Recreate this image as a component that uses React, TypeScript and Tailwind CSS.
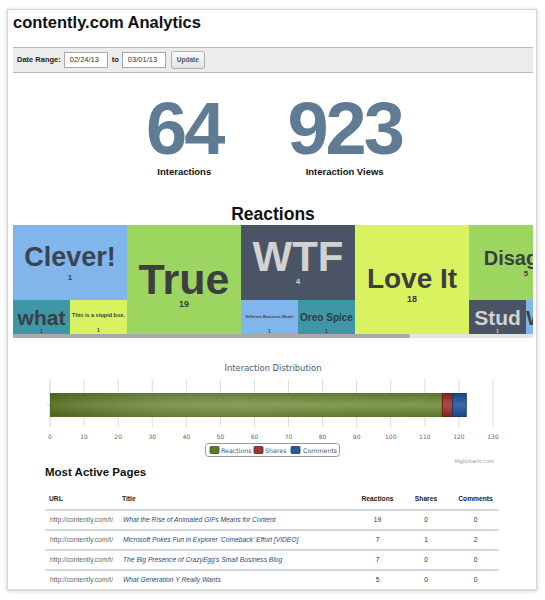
import React from "react";

const SANS = "font-['Liberation_Sans',Arial,sans-serif]";

type Tile = {
  label: string;
  count: number;
  bg: string;
  text: string;
  size: string;
  countSize: string;
  pad: string;
  gap: string;
};

type Column = { top?: Tile; full?: Tile; bottom?: Tile[] };

const COLUMNS: Column[] = [
  {
    top: { label: "Clever!", count: 1, bg: "bg-[#80b6ec]", text: "text-[#3b4452]", size: "text-[27px]", countSize: "text-[8px]", pad: "pt-[19px]", gap: "mt-[2px]" },
    bottom: [
      { label: "what", count: 1, bg: "bg-[#3f96a5]", text: "text-[#3a3f47]", size: "text-[21px]", countSize: "text-[5px]", pad: "pt-[7px]", gap: "mt-0" },
      { label: "This is a stupid box.", count: 1, bg: "bg-[#d9f25f]", text: "text-[#3d3f3a]", size: "text-[5.5px]", countSize: "text-[5px]", pad: "pt-[13px]", gap: "mt-[8px]" },
    ],
  },
  {
    full: { label: "True", count: 19, bg: "bg-[#9dd561]", text: "text-[#3d3e3f]", size: "text-[43px]", countSize: "text-[9px]", pad: "pt-[33px]", gap: "-mt-[2px]" },
  },
  {
    top: { label: "WTF", count: 4, bg: "bg-[#4a5464]", text: "text-[#d2d2d2]", size: "text-[42px]", countSize: "text-[8px]", pad: "pt-[11px]", gap: "-mt-[1px]" },
    bottom: [
      { label: "Different  Business  Model", count: 1, bg: "bg-[#80b6ec]", text: "text-[#3b4452]", size: "text-[4px]", countSize: "text-[5px]", pad: "pt-[15px]", gap: "mt-[9px]" },
      { label: "Oreo Spice", count: 1, bg: "bg-[#3f96a5]", text: "text-[#2f3a44]", size: "text-[10px]", countSize: "text-[5px]", pad: "pt-[13px]", gap: "mt-[5px]" },
    ],
  },
  {
    full: { label: "Love It", count: 18, bg: "bg-[#d9f25f]", text: "text-[#3d3e3f]", size: "text-[28px]", countSize: "text-[9px]", pad: "pt-[40px]", gap: "mt-[1px]" },
  },
  {
    top: { label: "Disagree", count: 5, bg: "bg-[#9dd561]", text: "text-[#3d3e3f]", size: "text-[20px]", countSize: "text-[8px]", pad: "pt-[23px]", gap: "mt-[1px]" },
    bottom: [
      { label: "Stud", count: 1, bg: "bg-[#4a5464]", text: "text-[#d2d2d2]", size: "text-[21px]", countSize: "text-[5px]", pad: "pt-[7px]", gap: "mt-0" },
      { label: "Whoa", count: 1, bg: "bg-[#80b6ec]", text: "text-[#3b4452]", size: "text-[21px]", countSize: "text-[5px]", pad: "pt-[7px]", gap: "mt-0" },
    ],
  },
  {
    full: { label: "Nice", count: 3, bg: "bg-[#3f96a5]", text: "text-[#3a3f47]", size: "text-[28px]", countSize: "text-[8px]", pad: "pt-[40px]", gap: "mt-[1px]" },
  },
];

const PAGES = [
  { title: "What the Rise of Animated GIFs Means for Content", r: 19, s: 0, c: 0 },
  { title: "Microsoft Pokes Fun in Explorer 'Comeback' Effort [VIDEO]", r: 7, s: 1, c: 2 },
  { title: "The Big Presence of CrazyEgg's Small Business Blog", r: 7, s: 0, c: 0 },
  { title: "What Generation Y Really Wants", r: 5, s: 0, c: 0 },
];

function TreeTile({ t, className }: { t: Tile; className: string }) {
  return (
    <div className={`${className} ${t.bg} ${t.text} ${t.pad} overflow-hidden text-center font-bold`}>
      <div className={`${t.size} leading-none whitespace-nowrap`}>{t.label}</div>
      <div className={`${t.countSize} ${t.gap} leading-[1.2]`}>{t.count}</div>
    </div>
  );
}

function Treemap() {
  return (
    <div className="w-[520px]">
      <div className="flex h-[109px] overflow-hidden">
        {COLUMNS.map((col, i) => (
          <div key={i} className="flex w-[114px] shrink-0 flex-col">
            {col.full ? (
              <TreeTile t={col.full} className="h-[109px]" />
            ) : (
              <>
                {col.top && <TreeTile t={col.top} className="h-[75px]" />}
                <div className="flex h-[34px]">
                  {col.bottom?.map((b) => (
                    <TreeTile key={b.label} t={b} className="w-[57px] shrink-0" />
                  ))}
                </div>
              </>
            )}
          </div>
        ))}
      </div>
      <div className="flex h-[4px] bg-[#e4e4e4]">
        <div className="w-[397px] rounded-r-[2px] bg-[#a9a9a9]" />
      </div>
    </div>
  );
}

function DistributionChart() {
  const x0 = 37;
  const scale = 443 / 130;
  const ticks = Array.from({ length: 14 }, (_, i) => i * 10);
  const font = "'DejaVu Sans', Verdana, sans-serif";
  return (
    <svg width="520" height="110" className="block">
      <defs>
        <linearGradient id="g-react" x1="0" x2="0" y1="0" y2="1">
          <stop offset="0" stopColor="#536e22" />
          <stop offset="0.5" stopColor="#7a9444" />
          <stop offset="1" stopColor="#536e22" />
        </linearGradient>
        <linearGradient id="g-react-h" x1="0" x2="1" y1="0" y2="0">
          <stop offset="0" stopColor="#3a5010" stopOpacity="0.4" />
          <stop offset="0.6" stopColor="#ffffff" stopOpacity="0.1" />
          <stop offset="1" stopColor="#ffffff" stopOpacity="0.05" />
        </linearGradient>
        <linearGradient id="g-share" x1="0" x2="0" y1="0" y2="1">
          <stop offset="0" stopColor="#7e2320" />
          <stop offset="0.5" stopColor="#b04a45" />
          <stop offset="1" stopColor="#7e2320" />
        </linearGradient>
        <linearGradient id="g-comm" x1="0" x2="0" y1="0" y2="1">
          <stop offset="0" stopColor="#1b457f" />
          <stop offset="0.5" stopColor="#3a6cae" />
          <stop offset="1" stopColor="#1b457f" />
        </linearGradient>
      </defs>
      <text x="260" y="16" textAnchor="middle" fontFamily={font} fontSize="8.4" fill="#4a5b6c">
        Interaction Distribution
      </text>
      {ticks.map((t) => (
        <line key={t} x1={x0 + t * scale} x2={x0 + t * scale} y1="24" y2="72" stroke={t === 0 ? "#c0d0e0" : "#dcdcdc"} strokeWidth="1" />
      ))}
      <line x1={x0 - 3} x2={x0} y1="50" y2="50" stroke="#c0d0e0" />
      <rect x={x0 + 0.5} y="38.5" width={115 * scale} height="23" fill="url(#g-react)" stroke="#55702a" />
      <rect x={x0 + 0.5} y="38.5" width={115 * scale} height="23" fill="url(#g-react-h)" />
      <rect x={x0 + 115 * scale + 0.5} y="38.5" width={3 * scale} height="23" fill="url(#g-share)" stroke="#6e1e1c" />
      <rect x={x0 + 118 * scale + 0.5} y="38.5" width={4 * scale} height="23" fill="url(#g-comm)" stroke="#173d70" />
      {ticks.map((t) => (
        <text key={t} x={x0 + t * scale} y="84" textAnchor="middle" fontFamily={font} fontSize="6" fill="#666">
          {t}
        </text>
      ))}
      <rect x="192.5" y="88.5" width="134" height="13" rx="3" fill="#fff" stroke="#9a9a9a" />
      <rect x="197" y="91.5" width="9" height="7" rx="1" fill="#5f7a2c" stroke="#3f5516" strokeWidth="0.8" />
      <text x="208" y="98" fontFamily={font} fontSize="6.3" fill="#3e576f">Reactions</text>
      <rect x="241" y="91.5" width="9" height="7" rx="1" fill="#983733" stroke="#6a1c19" strokeWidth="0.8" />
      <text x="252" y="98" fontFamily={font} fontSize="6.3" fill="#3e576f">Shares</text>
      <rect x="278" y="91.5" width="9" height="7" rx="1" fill="#2a5a98" stroke="#163a6a" strokeWidth="0.8" />
      <text x="290" y="98" fontFamily={font} fontSize="6.3" fill="#3e576f">Comments</text>
      <text x="481" y="108" textAnchor="end" fontFamily={font} fontSize="5" fill="#909090">
        Highcharts.com
      </text>
    </svg>
  );
}

export default function App() {
  return (
    <div className={`h-[600px] w-[545px] overflow-hidden bg-white pl-[7px] pt-[9px] ${SANS}`}>
      <div className="h-[581px] w-[530px] overflow-hidden border border-[#d6d6d6] bg-white shadow-[0_1px_4px_rgba(0,0,0,0.22)]">
        <div className="ml-[5px] w-[520px]">
          <h1 className="mt-[2px] text-[16.5px] font-bold leading-[20px] text-[#111]">contently.com Analytics</h1>

          <div className="mt-[15px] flex h-[26px] items-center border-y border-[#b9b9b9] bg-[#ececec] pl-[4px] text-[7.5px]">
            <span className="font-bold text-[#222]">Date Range:</span>
            <div className="ml-[3px] flex h-[16px] w-[44px] items-center border border-[#a9a9a9] bg-white pl-[5px] text-[#333]">02/24/13</div>
            <span className="ml-[4px] font-bold text-[#222]">to</span>
            <div className="ml-[3px] flex h-[16px] w-[44px] items-center border border-[#a9a9a9] bg-white pl-[5px] text-[#333]">03/01/13</div>
            <button className="ml-[5px] h-[18px] w-[34px] rounded-[2px] border border-[#b0b0b0] bg-[linear-gradient(#fafafa,#e2e2e2)] text-[6.5px] font-bold text-[#555]">
              Update
            </button>
          </div>

          <div className="mt-[19px] flex justify-center gap-[65px] pl-[2px]">
            <div className="flex flex-col items-center">
              <div className="text-[74px] font-bold leading-none tracking-[-3px] text-[#5f7c94]">64</div>
              <div className="text-[9.5px] font-bold leading-[12px] text-[#111]">Interactions</div>
            </div>
            <div className="flex flex-col items-center">
              <div className="text-[74px] font-bold leading-none tracking-[-3px] text-[#5f7c94]">923</div>
              <div className="text-[9.5px] font-bold leading-[12px] text-[#111]">Interaction Views</div>
            </div>
          </div>

          <h2 className="mt-[26px] text-center text-[17.5px] font-bold leading-[20px] text-[#111]">Reactions</h2>

          <div className="mt-[1px]">
            <Treemap />
          </div>

          <div className="mt-[17px]">
            <DistributionChart />
          </div>

          <div className="ml-[32px] w-[454px]">
            <h2 className="text-[11.5px] font-bold leading-[14px] text-[#111]">Most Active Pages</h2>
            <table className="mt-[11px] w-[454px] table-fixed border-collapse text-[6.7px]">
              <colgroup>
                <col className="w-[73px]" />
                <col className="w-[237px]" />
                <col className="w-[45px]" />
                <col className="w-[52px]" />
                <col className="w-[47px]" />
              </colgroup>
              <thead>
                <tr className="h-[20px] border-b-2 border-[#d5dae2] font-bold text-[#222]">
                  <th className="pl-[4px] text-left">URL</th>
                  <th className="pl-[4px] text-left">Title</th>
                  <th className="text-center">Reactions</th>
                  <th className="text-center">Shares</th>
                  <th className="text-center">Comments</th>
                </tr>
              </thead>
              <tbody>
                {PAGES.map((p) => (
                  <tr key={p.title} className="h-[20px] border-b-2 border-[#d5dae2]">
                    <td className="pl-[5px] text-[#666]">
                      <div className="w-[63px] overflow-hidden whitespace-nowrap">http://contently.com/t/what</div>
                    </td>
                    <td className="pl-[5px] whitespace-nowrap italic text-[#2b4a7e]">{p.title}</td>
                    <td className="text-center text-[#333]">{p.r}</td>
                    <td className="text-center text-[#333]">{p.s}</td>
                    <td className="text-center text-[#333]">{p.c}</td>
                  </tr>
                ))}
              </tbody>
            </table>
          </div>
        </div>
      </div>
    </div>
  );
}
